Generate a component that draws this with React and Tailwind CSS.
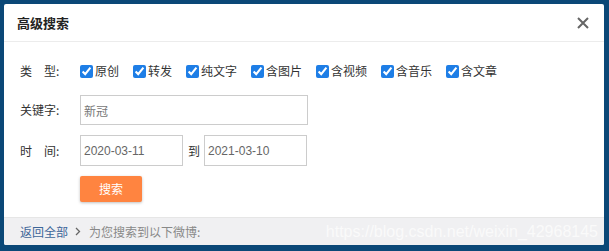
const types = ['原创', '转发', '纯文字', '含图片', '含视频', '含音乐', '含文章']

function Row({ label, children }) {
  return (
    <div className="flex items-center">
      <div className="w-[60px] text-[12px] text-[#333]">{label}</div>
      {children}
    </div>
  )
}

export default function App() {
  return (
    <div
      className="w-[609px] h-[251px] bg-[#0b4877] p-[4px] pb-[6px]"
      style={{ fontFamily: '"Microsoft YaHei", "Noto Sans CJK SC", sans-serif' }}
    >
      <div className="w-[600px] h-[241px] bg-white rounded-[2px] flex flex-col overflow-hidden">
        <div className="h-[38px] flex items-center justify-between pl-[13px] pr-[15px] border-b border-[#ececec] shrink-0">
          <span className="text-[13px] font-bold text-[#222]">高级搜索</span>
          <svg width="12" height="12" viewBox="0 0 12 12" className="mt-px">
            <path d="M1 1 L11 11 M11 1 L1 11" stroke="#666" strokeWidth="2" />
          </svg>
        </div>

        <div className="flex-1 pl-[16px] pt-[20px] flex flex-col">
          <Row label={<span>类<span className="inline-block w-[12px]" />型:</span>}>
            <div className="flex items-center">
              {types.map((t) => (
                <label key={t} className="flex items-center mr-[14px] text-[12px] text-[#333]">
                  <input type="checkbox" defaultChecked className="w-[13px] h-[13px] m-0 mr-[2px] accent-[#1e7ee6]" />
                  {t}
                </label>
              ))}
            </div>
          </Row>

          <div className="mt-[15px]">
            <Row label="关键字:">
              <input
                defaultValue="新冠"
                className="w-[228px] h-[30px] border border-[#ccc] px-[3px] text-[12px] text-[#777] outline-none"
              />
            </Row>
          </div>

          <div className="mt-[10px]">
            <Row label={<span>时<span className="inline-block w-[12px]" />间:</span>}>
              <input
                defaultValue="2020-03-11"
                className="w-[103px] h-[31px] border border-[#ccc] px-[3px] text-[12px] text-[#666] outline-none"
                style={{ fontFamily: 'Arial, "Liberation Sans", sans-serif' }}
              />
              <span className="text-[12px] text-[#333] ml-[5px] mr-[4px]">到</span>
              <input
                defaultValue="2021-03-10"
                className="w-[103px] h-[31px] border border-[#ccc] px-[3px] text-[12px] text-[#666] outline-none"
                style={{ fontFamily: 'Arial, "Liberation Sans", sans-serif' }}
              />
            </Row>
          </div>

          <div className="mt-[9px] pl-[60px]">
            <button className="w-[62px] h-[26px] bg-[#ff8440] text-white text-[12px] rounded-[2px] shadow-[0_1px_3px_rgba(0,0,0,0.25)]">
              搜索
            </button>
          </div>
        </div>

        <div className="h-[28px] bg-[#f0f0f2] border-t border-[#e6e6e6] flex items-center pl-[16px] pr-[6px] shrink-0">
          <span className="text-[12px] text-[#3d6699]">返回全部</span>
          <svg width="6" height="9" viewBox="0 0 6 9" className="ml-[7px] mr-[8px]">
            <path d="M1 1 L4.5 4.5 L1 8" stroke="#666" strokeWidth="1.3" fill="none" />
          </svg>
          <span className="text-[12px] text-[#888]">为您搜索到以下微博:</span>
          <span
            className="ml-auto text-[16px] text-[#fafafa]"
            style={{ fontFamily: 'Arial, "Liberation Sans", sans-serif' }}
          >
            https://blog.csdn.net/weixin_42968145
          </span>
        </div>
      </div>
    </div>
  )
}
